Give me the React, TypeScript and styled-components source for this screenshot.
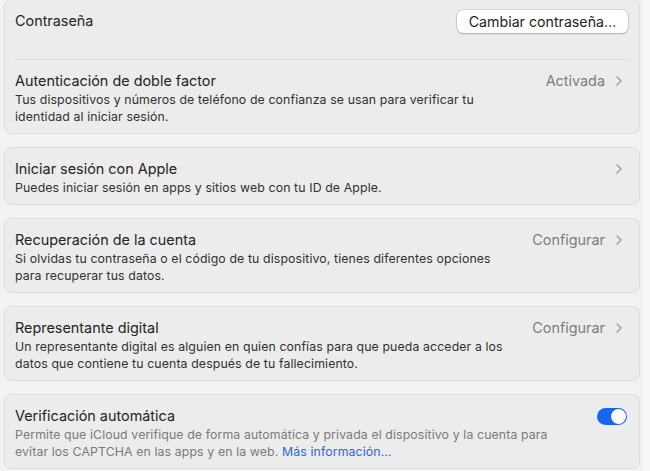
import styled, { createGlobalStyle } from 'styled-components';

const GlobalStyle = createGlobalStyle`
  html, body {
    margin: 0;
    padding: 0;
    background: #f2f2f2;
    font-family: Inter, "Noto Sans", "Liberation Sans", sans-serif;
    -webkit-font-smoothing: antialiased;
  }
`;

const Page = styled.div`
  display: flex;
  width: 650px;
  height: 471px;
  overflow: hidden;
  background: #f2f2f2;
`;

const List = styled.div`
  display: flex;
  flex-direction: column;
  gap: 13px;
  width: 636px;
  margin-top: -1px;
  padding-left: 4px;
  flex-shrink: 0;
`;

const Gutter = styled.div`
  flex: 1;
  margin-left: 1px;
  background: #f6f6f6;
  border-left: 1px solid #ebebeb;
`;

const Card = styled.div`
  display: flex;
  flex-direction: column;
  background: #ececec;
  border: 1px solid #dedede;
  border-radius: 7px;
  padding: 0 10px;
`;

const Row = styled.div`
  display: flex;
  align-items: flex-start;
  justify-content: space-between;
  padding: 11px 0 8px;
`;

const TopRow = styled.div`
  display: flex;
  align-items: flex-start;
  justify-content: space-between;
  height: 60px;
  box-sizing: border-box;
  padding-top: 11px;
  border-bottom: 1px solid #dcdcdc;
`;

const TextBlock = styled.div`
  display: flex;
  flex-direction: column;
  gap: 1px;
`;

const Title = styled.div`
  font-size: 14.4px;
  line-height: 19px;
  color: #242424;
  white-space: nowrap;
`;

const Subtitle = styled.div<{ $muted?: boolean }>`
  font-size: 12.3px;
  line-height: 17px;
  letter-spacing: 0.12px;
  color: ${({ $muted }) => ($muted ? '#7a7a7a' : '#303030')};
  white-space: nowrap;
`;

const Link = styled.span`
  color: #2a66d9;
`;

const Aside = styled.div`
  display: flex;
  align-items: center;
  gap: 11px;
  height: 19px;
  padding-right: 7px;
`;

const Value = styled.span`
  font-size: 14.4px;
  color: #7c7c7c;
`;

const Chevron = styled.svg`
  width: 6px;
  height: 10px;
`;

const Button = styled.button`
  font-family: inherit;
  font-size: 14.2px;
  color: #222;
  background: #ffffff;
  border: none;
  border-radius: 6px;
  height: 23px;
  width: 171px;
  margin-top: -1px;
  margin-right: 1px;
  box-shadow: 0 0 0 0.5px rgba(0, 0, 0, 0.18), 0 1px 2px rgba(0, 0, 0, 0.2);
  padding: 0;
`;

const Toggle = styled.div`
  display: flex;
  align-items: center;
  justify-content: flex-end;
  width: 30px;
  height: 17px;
  margin-top: 1px;
  margin-right: -5px;
  border-radius: 9px;
  background: #1766f2;
  padding: 1px;
  box-sizing: border-box;
`;

const Knob = styled.div`
  width: 15px;
  height: 15px;
  border-radius: 50%;
  background: #fff;
  box-shadow: 0 0 1px rgba(0, 0, 0, 0.3);
`;

const ChevronIcon = () => (
  <Chevron viewBox="0 0 6 10">
    <path d="M1 1l4 4-4 4" fill="none" stroke="#9a9a9a" strokeWidth="1.3" strokeLinecap="round" strokeLinejoin="round" />
  </Chevron>
);

interface SettingProps {
  title: string;
  lines: React.ReactNode[];
  value?: string;
  muted?: boolean;
  right?: React.ReactNode;
}

const Setting = ({ title, lines, value, muted, right }: SettingProps) => (
  <Row>
    <TextBlock>
      <Title>{title}</Title>
      <Subtitle $muted={muted}>
        {lines.map((line, i) => (
          <div key={i}>{line}</div>
        ))}
      </Subtitle>
    </TextBlock>
    <Aside>
      {right ?? (
        <>
          {value && <Value>{value}</Value>}
          <ChevronIcon />
        </>
      )}
    </Aside>
  </Row>
);

const App = () => (
  <Page>
    <GlobalStyle />
    <List>
      <Card>
        <TopRow>
          <Title>Contraseña</Title>
          <Button>Cambiar contraseña…</Button>
        </TopRow>
        <Setting
          title="Autenticación de doble factor"
          value="Activada"
          lines={[
            'Tus dispositivos y números de teléfono de confianza se usan para verificar tu',
            'identidad al iniciar sesión.',
          ]}
        />
      </Card>
      <Card>
        <Setting
          title="Iniciar sesión con Apple"
          lines={['Puedes iniciar sesión en apps y sitios web con tu ID de Apple.']}
        />
      </Card>
      <Card>
        <Setting
          title="Recuperación de la cuenta"
          value="Configurar"
          lines={[
            'Si olvidas tu contraseña o el código de tu dispositivo, tienes diferentes opciones',
            'para recuperar tus datos.',
          ]}
        />
      </Card>
      <Card>
        <Setting
          title="Representante digital"
          value="Configurar"
          lines={[
            'Un representante digital es alguien en quien confías para que pueda acceder a los',
            'datos que contiene tu cuenta después de tu fallecimiento.',
          ]}
        />
      </Card>
      <Card>
        <Setting
          title="Verificación automática"
          muted
          lines={[
            'Permite que iCloud verifique de forma automática y privada el dispositivo y la cuenta para',
            <>
              evitar los CAPTCHA en las apps y en la web. <Link>Más información…</Link>
            </>,
          ]}
          right={
            <Toggle>
              <Knob />
            </Toggle>
          }
        />
      </Card>
    </List>
    <Gutter />
  </Page>
);

export default App;
